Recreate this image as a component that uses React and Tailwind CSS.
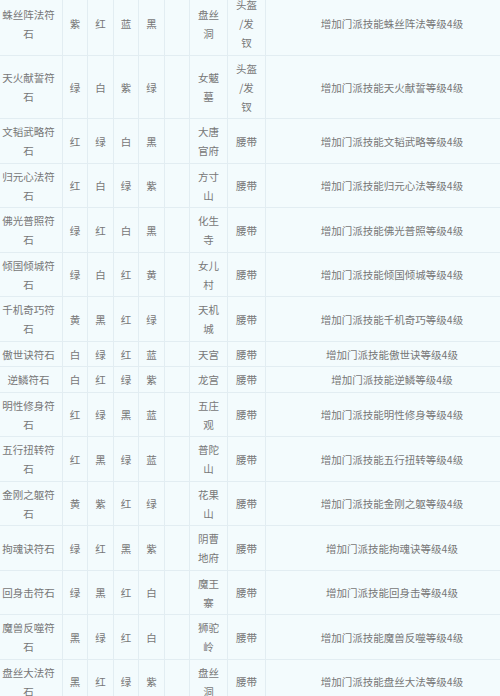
const rows = [
  ['蛛丝阵法符\n石', ['紫', '红', '蓝', '黑'], '盘丝\n洞', '头盔\n/发\n钗', '蛛丝阵法'],
  ['天火献誓符\n石', ['绿', '白', '紫', '绿'], '女魃\n墓', '头盔\n/发\n钗', '天火献誓'],
  ['文韬武略符\n石', ['红', '绿', '白', '黑'], '大唐\n官府', '腰带', '文韬武略'],
  ['归元心法符\n石', ['红', '白', '绿', '紫'], '方寸\n山', '腰带', '归元心法'],
  ['佛光普照符\n石', ['绿', '红', '白', '黑'], '化生\n寺', '腰带', '佛光普照'],
  ['倾国倾城符\n石', ['绿', '白', '红', '黄'], '女儿\n村', '腰带', '倾国倾城'],
  ['千机奇巧符\n石', ['黄', '黑', '红', '绿'], '天机\n城', '腰带', '千机奇巧'],
  ['傲世诀符石', ['白', '绿', '红', '蓝'], '天宫', '腰带', '傲世诀'],
  ['逆鳞符石', ['白', '红', '绿', '紫'], '龙宫', '腰带', '逆鳞'],
  ['明性修身符\n石', ['红', '绿', '黑', '蓝'], '五庄\n观', '腰带', '明性修身'],
  ['五行扭转符\n石', ['红', '黑', '绿', '蓝'], '普陀\n山', '腰带', '五行扭转'],
  ['金刚之躯符\n石', ['黄', '紫', '红', '绿'], '花果\n山', '腰带', '金刚之躯'],
  ['拘魂诀符石', ['绿', '红', '黑', '紫'], '阴曹\n地府', '腰带', '拘魂诀'],
  ['回身击符石', ['绿', '黑', '红', '白'], '魔王\n寨', '腰带', '回身击'],
  ['魔兽反噬符\n石', ['黑', '绿', '红', '白'], '狮驼\n岭', '腰带', '魔兽反噬'],
  ['盘丝大法符\n石', ['黑', '红', '绿', '紫'], '盘丝\n洞', '腰带', '盘丝大法'],
];

const cell =
  'border border-[#e2edf2] px-0 pt-[3px] pb-[2.5px] text-center align-middle whitespace-pre-line';

const App = () => {
  return (
    <div
      className="w-[500px] h-[696px] overflow-hidden bg-[#f3fbfd] text-[#777777] text-[10.5px] leading-[19px]"
      style={{ fontFamily: '"Noto Sans CJK SC", "Noto Sans", sans-serif' }}
    >
      <table className="table-fixed border-collapse w-[525px] -ml-[6px] -mt-[9px]">
        <colgroup>
          <col className="w-[68px]" />
          <col className="w-[25px]" />
          <col className="w-[26px]" />
          <col className="w-[25px]" />
          <col className="w-[26px]" />
          <col className="w-[25px]" />
          <col className="w-[38px]" />
          <col className="w-[38px]" />
          <col />
        </colgroup>
        <tbody>
          {rows.map(([name, colors, place, slot, skill], i) => (
            <tr key={i}>
              <td className={cell}>{name}</td>
              {colors.map((c, j) => (
                <td key={j} className={cell}>
                  {c}
                </td>
              ))}
              <td className={cell}></td>
              <td className={cell}>{place}</td>
              <td className={cell}>{slot}</td>
              <td className={cell}>增加门派技能{skill}等级4级</td>
            </tr>
          ))}
        </tbody>
      </table>
    </div>
  );
};

export default App;
